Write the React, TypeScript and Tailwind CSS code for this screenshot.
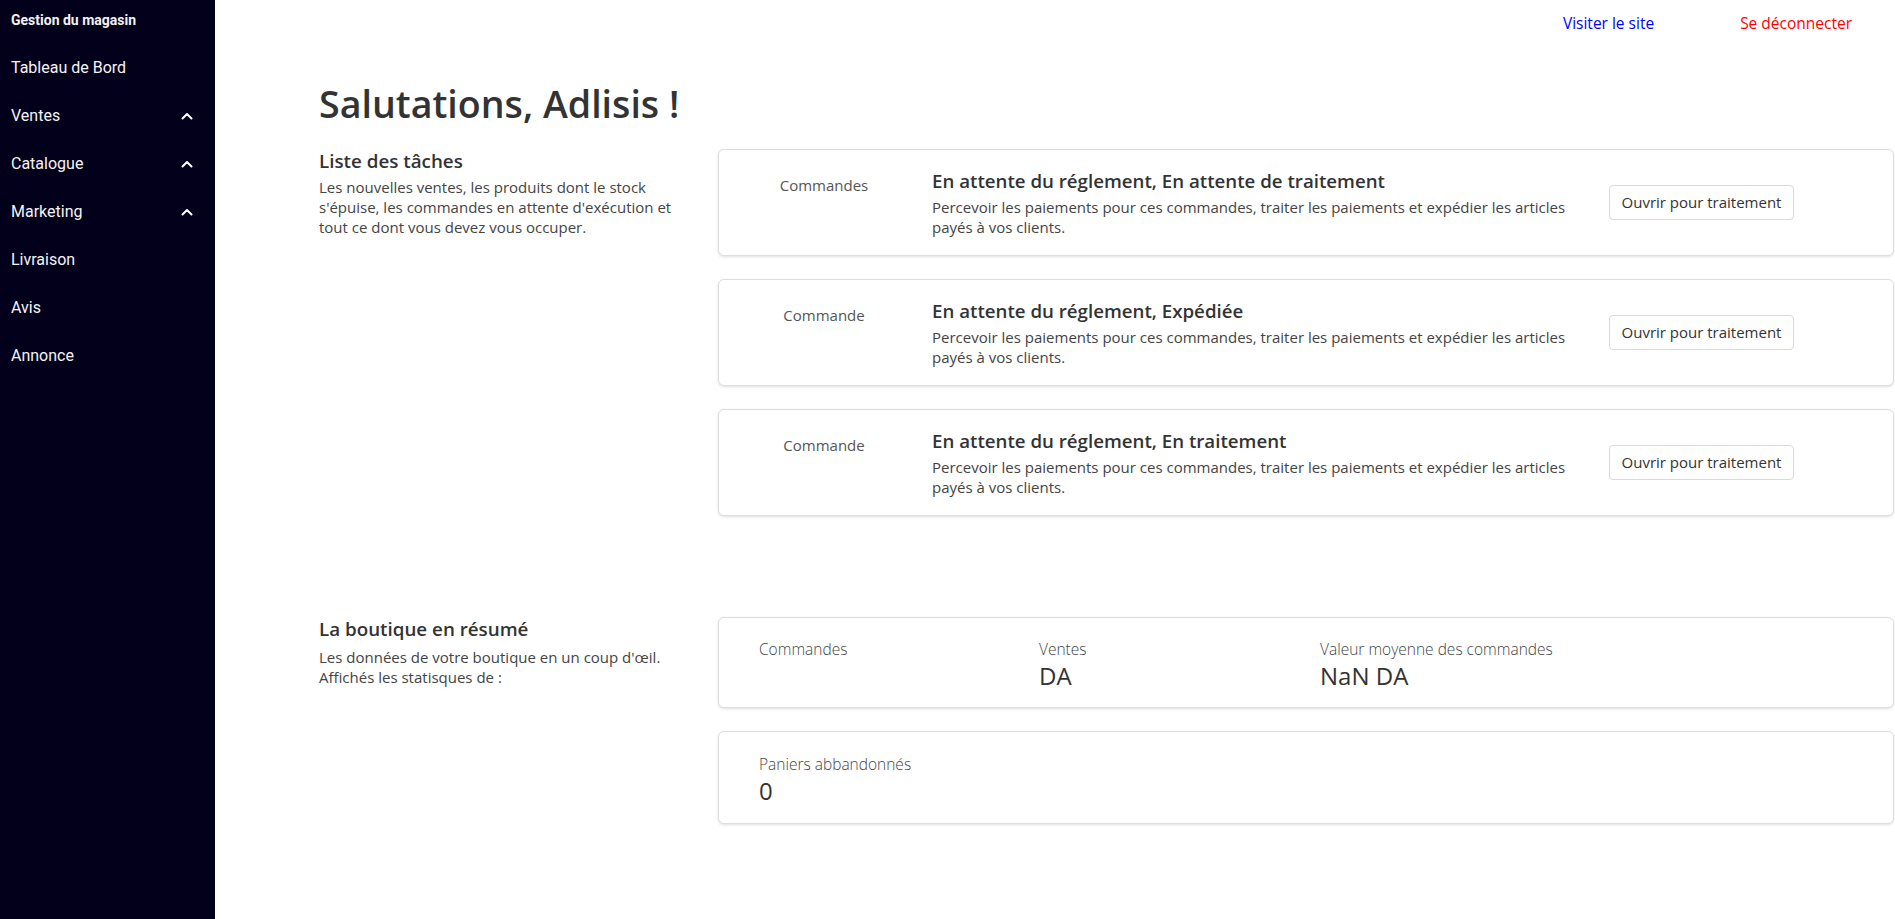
import React from "react";

const Chevron = () => (
  <svg width="12" height="8" viewBox="0 0 12 8" fill="none">
    <polyline points="1.5,6.5 6,2 10.5,6.5" stroke="white" strokeWidth="2" strokeLinecap="round" strokeLinejoin="round" />
  </svg>
);

const navItems: { label: string; chevron?: boolean }[] = [
  { label: "Tableau de Bord" },
  { label: "Ventes", chevron: true },
  { label: "Catalogue", chevron: true },
  { label: "Marketing", chevron: true },
  { label: "Livraison" },
  { label: "Avis" },
  { label: "Annonce" },
];

const tasks = [
  { label: "Commandes", title: "En attente du réglement, En attente de traitement" },
  { label: "Commande", title: "En attente du réglement, Expédiée" },
  { label: "Commande", title: "En attente du réglement, En traitement" },
];

function TaskCard({ label, title }: { label: string; title: string }) {
  return (
    <div className="flex h-[107px] items-center rounded-[6px] border border-[#dedede] bg-white shadow-[0_1px_3px_rgba(0,0,0,0.13)]">
      <div className="mt-[23px] w-[210px] self-start text-center text-[15px] leading-[24px] text-[#555]">{label}</div>
      <div className="ml-[3px] mt-[18px] w-[640px] self-start">
        <div className="text-[18.7px] font-semibold leading-[26px] text-[#333]">{title}</div>
        <div className="mt-[3px] whitespace-nowrap text-[15px] leading-[20px] text-[#444]">
          Percevoir les paiements pour ces commandes, traiter les paiements et expédier les articles
          <br />
          payés à vos clients.
        </div>
      </div>
      <button className="ml-[37px] flex h-[35px] w-[185px] items-center justify-center rounded-[4px] border border-[#d9d9d9] bg-white text-[15px] text-[#333]">
        Ouvrir pour traitement
      </button>
    </div>
  );
}

export default function App() {
  return (
    <div className="flex min-h-[919px] w-full bg-white">
      <aside className="w-[215px] shrink-0 bg-[#03001c] font-['Roboto',sans-serif] text-white">
        <div className="h-[44px] pl-[11px] pt-[12px] text-[14px] font-bold leading-[16px] text-[#f2f2f2]">
          Gestion du magasin
        </div>
        <nav>
          {navItems.map((it) => (
            <div key={it.label} className="flex h-[48px] items-center justify-between pl-[11px] pr-[22px] text-[16px] text-[#f4f4f4]">
              <span>{it.label}</span>
              {it.chevron && <Chevron />}
            </div>
          ))}
        </nav>
      </aside>

      <main className="min-w-0 flex-1 font-['Open_Sans',sans-serif]">
        <div className="flex h-[48px] items-center justify-end gap-[86px] pr-[43px] text-[15.5px]">
          <a className="text-[#0000ff]">Visiter le site</a>
          <a className="text-[#ff0000]">Se déconnecter</a>
        </div>

        <div className="pl-[104px] pr-[1px]">
          <h1 className="mt-[32px] text-[37.6px] font-semibold leading-[48px] text-[#333]">Salutations, Adlisis !</h1>

          <section className="mt-[21px] flex">
            <div className="w-[399px] shrink-0">
              <h5 className="text-[18.8px] font-semibold leading-[24px] text-[#333]">Liste des tâches</h5>
              <p className="mt-[4px] whitespace-nowrap text-[15px] leading-[20px] text-[#444]">
                Les nouvelles ventes, les produits dont le stock
                <br />
                s'épuise, les commandes en attente d'exécution et
                <br />
                tout ce dont vous devez vous occuper.
              </p>
            </div>
            <div className="flex min-w-0 flex-1 flex-col gap-[23px]">
              {tasks.map((t, i) => (
                <TaskCard key={i} label={t.label} title={t.title} />
              ))}
            </div>
          </section>

          <section className="mt-[101px] flex">
            <div className="w-[399px] shrink-0">
              <h5 className="text-[18.8px] font-semibold leading-[24px] text-[#333]">La boutique en résumé</h5>
              <p className="mt-[6px] whitespace-nowrap text-[15px] leading-[20px] text-[#444]">
                Les données de votre boutique en un coup d'œil.
                <br />
                Affichés les statisques de :
              </p>
            </div>
            <div className="flex min-w-0 flex-1 flex-col gap-[23px]">
              <div className="flex h-[91px] rounded-[6px] border border-[#dedede] bg-white pl-[40px] pt-[21px] shadow-[0_1px_3px_rgba(0,0,0,0.13)]">
                <div className="w-[280px]">
                  <div className="text-[15.5px] font-light leading-[20px] text-[#444]">Commandes</div>
                </div>
                <div className="w-[281px]">
                  <div className="text-[15.5px] font-light leading-[20px] text-[#444]">Ventes</div>
                  <div className="mt-[2px] text-[24px] leading-[30px] text-[#333]">DA</div>
                </div>
                <div>
                  <div className="text-[15.5px] font-light leading-[20px] text-[#444]">Valeur moyenne des commandes</div>
                  <div className="mt-[2px] text-[24px] leading-[30px] text-[#333]">NaN DA</div>
                </div>
              </div>
              <div className="h-[93px] rounded-[6px] border border-[#dedede] bg-white pl-[40px] pt-[22px] shadow-[0_1px_3px_rgba(0,0,0,0.13)]">
                <div className="text-[15.5px] font-light leading-[20px] text-[#444]">Paniers abbandonnés</div>
                <div className="mt-[2px] text-[24px] leading-[30px] text-[#333]">0</div>
              </div>
            </div>
          </section>
        </div>
      </main>
    </div>
  );
}
